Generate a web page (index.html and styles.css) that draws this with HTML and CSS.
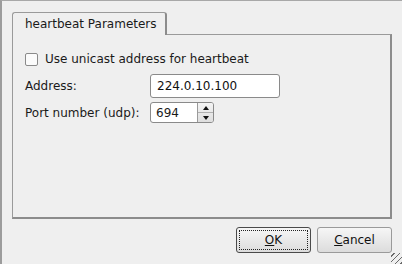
FILE: index.html
```html
<!DOCTYPE html>
<html lang="en">
<head>
    <meta charset="UTF-8">
    <title>heartbeat Parameters</title>
    <link rel="stylesheet" href="styles.css">
</head>
<body>
    <div class="window">
        <div class="tab-bar">
            <div class="tab">heartbeat Parameters</div>
        </div>
        <div class="panel">
            <label class="check-row">
                <span class="checkbox"></span>
                <span>Use unicast address for heartbeat</span>
            </label>
            <div class="field-row">
                <span class="field-label">Address:</span>
                <div class="text-box address">224.0.10.100</div>
            </div>
            <div class="field-row">
                <span class="field-label">Port number (udp):</span>
                <div class="spin-box">
                    <div class="spin-value">694</div>
                    <div class="spin-arrows">
                        <span class="arrow up"></span>
                        <span class="arrow down"></span>
                    </div>
                </div>
            </div>
        </div>
        <div class="button-row">
            <button class="btn default"><span class="focus"><u>O</u>K</span></button>
            <button class="btn"><span class="focus-none"><u>C</u>ancel</span></button>
        </div>
        <div class="grip"></div>
    </div>
</body>
</html>
```

FILE: styles.css
```css
*{
    margin: 0;
    padding: 0;
    box-sizing: border-box;
}

html, body{
    width: 402px;
    height: 264px;
    overflow: hidden;
}

body{
    background-color: #efefef;
    font-family: "DejaVu Sans", sans-serif;
    font-size: 12px;
    color: #1a1a1a;
}

.window{
    position: relative;
    width: 402px;
    height: 264px;
    border-top: 1px solid #a8a8a8;
    border-left: 2px solid #9c9c9c;
    padding: 11px 10px 0 10px;
}

.tab-bar{
    display: flex;
    height: 22px;
}

.tab{
    width: 155px;
    height: 23px;
    border: 1px solid #9a9a9a;
    border-right: 2px solid #8c8c8c;
    border-bottom: none;
    border-radius: 3px 3px 0 0;
    background-color: #efefef;
    padding: 4px 0 0 12px;
    position: relative;
    z-index: 1;
}

.panel{
    height: 185px;
    border: 1px solid #9a9a9a;
    border-right: 2px solid #8c8c8c;
    border-bottom: 2px solid #8c8c8c;
    padding: 18px 12px 0 12px;
}

.check-row{
    display: flex;
    align-items: center;
    gap: 7px;
    height: 12px;
    margin-bottom: 9px;
}

.checkbox{
    width: 13px;
    height: 13px;
    border: 1px solid #8a8a8a;
    border-radius: 2px;
    background-color: #fbfbfb;
}

.field-row{
    display: flex;
    align-items: center;
    margin-top: 4px;
}

.field-label{
    width: 125px;
}

.text-box{
    height: 24px;
    border: 1px solid #8a8a8a;
    border-radius: 3px;
    background-color: #fff;
    padding: 4px 0 0 6px;
    color: #111;
}

.address{
    width: 130px;
}

.spin-box{
    display: flex;
    width: 64px;
    height: 21px;
    border: 1px solid #8a8a8a;
    border-radius: 3px;
    background-color: #fff;
}

.spin-value{
    flex: 1;
    padding: 3px 0 0 5px;
}

.spin-arrows{
    width: 16px;
    display: flex;
    flex-direction: column;
    border-left: 1px solid #9a9a9a;
    background: linear-gradient(#f4f4f4, #dedede);
    border-radius: 0 2px 2px 0;
}

.arrow{
    flex: 1;
    display: flex;
    align-items: center;
    justify-content: center;
}

.arrow.up{
    border-bottom: 1px solid #b0b0b0;
}

.arrow::before{
    content: "";
    border-left: 3px solid transparent;
    border-right: 3px solid transparent;
}

.arrow.up::before{
    border-bottom: 4px solid #111;
}

.arrow.down::before{
    border-top: 4px solid #111;
}

.button-row{
    display: flex;
    justify-content: flex-end;
    gap: 6px;
    margin-top: 8px;
}

.btn{
    width: 75px;
    height: 26px;
    border: 1px solid #9a9a9a;
    border-radius: 3px;
    background: linear-gradient(#f6f6f6, #dcdcdc);
    font-family: "DejaVu Sans", sans-serif;
    font-size: 12px;
    color: #111;
    display: flex;
    align-items: center;
    justify-content: center;
    padding: 2px;
}

.btn.default{
    border-color: #4a4a4a;
}

.focus, .focus-none{
    width: 100%;
    height: 100%;
    display: flex;
    align-items: center;
    justify-content: center;
}

.focus{
    border: 1px dotted #222;
}

.grip{
    position: absolute;
    right: 0;
    bottom: 0;
    width: 11px;
    height: 11px;
    background: repeating-linear-gradient(135deg, transparent 0 2px, #6a6a6a 2px 3px, transparent 3px 4px);
}
```
